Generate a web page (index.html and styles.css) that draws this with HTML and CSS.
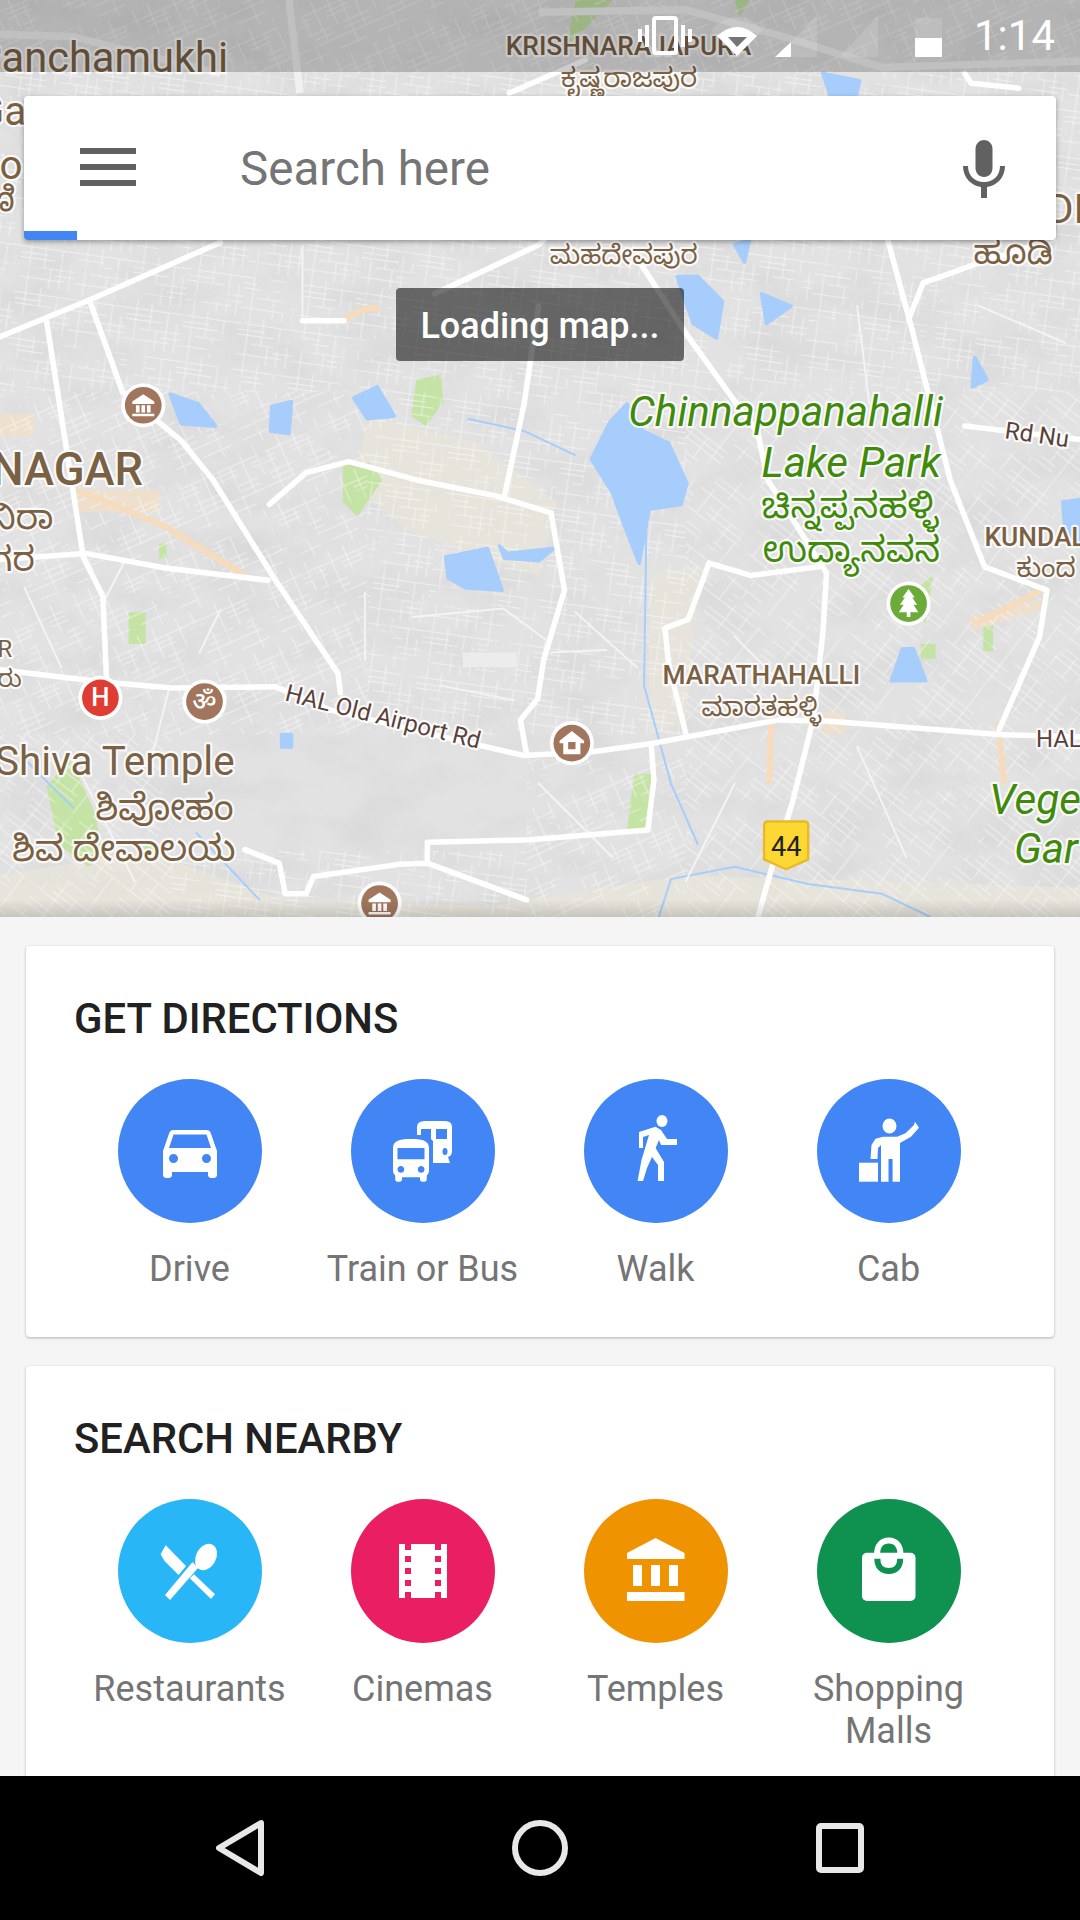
FILE: index.html
```html
<!DOCTYPE html>
<html lang="en">
<head>
<meta charset="utf-8">
<title>Maps</title>
<link rel="stylesheet" href="styles.css">
</head>
<body>
<div class="phone">
  <section class="map">
    <svg class="map-canvas" viewBox="0 0 882 749" preserveAspectRatio="none">
      <defs>
        <pattern id="st1" width="46" height="38" patternUnits="userSpaceOnUse" patternTransform="rotate(8)">
          <path class="grid" d="M0 6H46M0 11H22M0 15H30M12 22H46M30 27H46M0 31H38M8 0V38M20 0V22M34 6V38M42 14V38M26 22V38"/>
        </pattern>
        <pattern id="st2" width="34" height="52" patternUnits="userSpaceOnUse" patternTransform="rotate(-24)">
          <path class="grid" d="M0 9H34M0 13H20M0 17H20M10 26H34M10 31H34M0 36H34M0 45H24M6 0V26M16 9V52M27 0V36"/>
        </pattern>
        <pattern id="st3" width="58" height="44" patternUnits="userSpaceOnUse" patternTransform="rotate(38)">
          <path class="grid" d="M0 5H40M16 14H58M16 19H58M0 24H58M6 34H44M6 39H44M10 0V24M24 5V44M38 14V34M50 0V44"/>
        </pattern>
        <filter id="hill" x="0" y="0" width="100%" height="100%">
          <feTurbulence type="fractalNoise" baseFrequency="0.018 0.03" numOctaves="4" seed="7"/>
          <feColorMatrix type="matrix" values="0 0 0 0 0.4  0 0 0 0 0.4  0 0 0 0 0.4  1.4 0 0 0 -0.58"/>
        </filter>
        <filter id="patchy" x="0" y="0" width="100%" height="100%">
          <feTurbulence type="fractalNoise" baseFrequency="0.04" numOctaves="3" seed="23" result="noise"/>
          <feColorMatrix in="noise" type="matrix" values="0 0 0 0 1  0 0 0 0 1  0 0 0 0 1  7 0 0 0 -2.3" result="holes"/>
          <feComposite in="SourceGraphic" in2="holes" operator="in"/>
        </filter>
        <linearGradient id="fade" x1="0" y1="0" x2="0" y2="1">
          <stop offset="0" stop-color="#000" stop-opacity="0"/>
          <stop offset="1" stop-color="#000" stop-opacity=".14"/>
        </linearGradient>
      </defs>

      <rect class="ground" width="882" height="749"/>
      <rect width="882" height="749" filter="url(#hill)" class="hill"/>

      <g class="land-beige">
        <path d="M300 340 L390 362 L455 410 L440 470 L330 432 L290 395Z"/>
        <path d="M530 470 L572 462 L560 590 L530 600Z"/>
        <path d="M0 715 L120 695 L230 735 L400 740 L560 715 L882 725 V749 H0Z"/>
      </g>
      <g class="land-green">
        <path d="M340 310 L360 306 L362 328 L348 348 L336 340Z"/>
        <path d="M280 380 L302 378 L312 392 L292 422 L280 410Z"/>
        <path d="M38 642 L58 620 L78 665 L84 700 L72 708 L48 690Z"/>
        <path d="M518 632 L532 632 L530 676 L512 678Z"/>
        <path d="M752 478 L762 470 L756 510 L748 500Z"/>
        <path d="M470 0 L500 0 L462 40Z"/>
        <path d="M600 0 L612 0 L604 14Z"/>
        <rect x="105" y="500" width="14" height="26"/>
        <rect x="130" y="444" width="6" height="12"/>
        <rect x="118" y="688" width="10" height="14"/>
        <rect x="752" y="526" width="12" height="12"/>
        <rect x="803" y="510" width="8" height="22"/>
        <rect x="640" y="570" width="6" height="14"/>
      </g>
      <g class="land-peach">
        <path d="M0 338 H28 V356 H0Z"/>
        <path d="M60 400 H130 V418 H60Z"/>
        <path d="M790 505 L850 490 V498 L795 515Z"/>
        <path d="M672 582 H690 V600 H672Z"/>
      </g>

      <g class="streets" filter="url(#patchy)">
        <path fill="url(#st1)" d="M0 60H882V320H0Z"/>
        <path fill="url(#st2)" d="M0 320H300V600H0Z"/>
        <path fill="url(#st1)" d="M300 320H560V600H300Z"/>
        <path fill="url(#st3)" d="M560 320H882V749H560Z"/>
        <path fill="url(#st2)" d="M430 620H560V749H430Z"/>
        <path fill="url(#st3)" d="M0 600H140V749H0Z"/>
        <path fill="url(#st1)" d="M140 695H430V749H140Z"/>
        <path fill="url(#st2)" d="M0 0H882V60H0Z"/>
      </g>

      <g class="water">
        <path d="M483 375 L498 345 L512 330 L525 352 L546 362 L561 395 L556 412 L530 416 L522 460 L511 432 L500 402Z"/>
        <path d="M364 455 L398 448 L410 482 L380 480 L366 472Z"/>
        <path d="M408 446 L414 452 L452 448 L440 458 L412 456Z"/>
        <path d="M289 325 L308 316 L322 340 L300 342Z"/>
        <path d="M139 322 L162 330 L176 348 L148 346Z"/>
        <path d="M222 332 L238 328 L236 354 L221 352Z"/>
        <path d="M553 226 L570 226 L590 246 L585 276 L566 264Z"/>
        <path d="M622 240 L646 250 L626 264Z"/>
        <path d="M796 292 L806 310 L794 316Z"/>
        <path d="M737 530 L746 530 L756 556 L728 556Z"/>
        <path d="M672 60 L702 66 L698 84 L680 84Z"/>
        <path d="M868 410 L882 408 V442 L870 436Z"/>
        <path d="M600 200 L612 196 L608 214Z"/>
        <path d="M230 600 L238 600 L238 610 L230 610Z"/>
      </g>
      <g class="river">
        <path d="M382 342 L428 352 L470 372"/>
        <path d="M528 420 L526 560 L548 640 L570 690"/>
        <path d="M538 749 L548 718 L600 708 L660 722 L720 730 L760 749"/>
        <path d="M20 620 L60 660"/>
        <path d="M160 680 L212 735"/>
      </g>

      <g class="road-peach">
        <path d="M62 400 L135 430 L200 470"/>
        <path d="M815 590 L820 640 M630 590 L628 640"/>
        <path d="M855 480 L795 510"/>
        <path d="M281 262 Q295 250 310 252"/>
      </g>
      <g class="road-thin">
        <path d="M298 484 V539"/>
        <path d="M337 504 L411 497 L445 522"/>
        <path d="M450 533 L495 531"/>
        <path d="M163 533 L180 498"/>
        <path d="M138 563 L124 618"/>
        <path d="M101 460 L87 487"/>
        <path d="M247 201 V261"/>
        <path d="M600 520 L640 560"/>
        <path d="M700 610 L740 700"/>
        <path d="M60 620 L110 720"/>
        <path d="M700 250 L710 330"/>
        <path d="M360 560 L420 572"/>
        <path d="M470 500 L520 545"/>
        <path d="M440 640 L500 700"/>
        <path d="M800 250 L870 280"/>
        <path d="M20 480 L50 545"/>
        <path d="M600 640 L560 720"/>
      </g>
      <rect class="runway" x="378" y="533" width="44" height="12"/>
      <g class="road">
        <path d="M0 547 L84 557 L141 562 L225 561 L270 580 L345 598 L427 617 L484 614 L534 607 L636 588 L675 589 L816 600 L882 602"/>
        <path d="M0 275 L73 245 L180 198"/>
        <path d="M73 245 L100 320 L148 360 L174 392 L225 474 L276 550 L278 566"/>
        <path d="M38 262 L68 455 L84 487 L87 555"/>
        <path d="M0 457 L70 452 L135 464 L219 474"/>
        <path d="M220 412 L250 386 L285 377 L340 392 L405 405 L450 419 L461 482 L444 539 L439 571 L425 588 L430 616"/>
        <path d="M523 215 L562 275 L619 354 L627 392 L675 468 L672 517 L664 588 L647 656 L630 710 L619 749"/>
        <path d="M725 196 L745 270 L776 392 L804 463 L855 482 L849 520 L816 596"/>
        <path d="M579 460 L613 470 L669 463"/>
        <path d="M579 460 L562 506 L543 513 L546 542 L560 599"/>
        <path d="M200 694 L228 705 L233 730 L250 730 L256 716 L326 706 L349 705 L430 735"/>
        <path d="M349 705 L349 688 L433 686 L529 678 L534 637 L532 610"/>
        <path d="M788 348 L882 359"/>
        <path d="M355 240 L440 200 L520 120"/>
        <path d="M416 76 L478 49"/>
        <path d="M247 262 L281 262"/>
        <path d="M412 405 L428 330 L440 250"/>
        <path d="M788 60 L793 68 L832 72"/>
        <path d="M742 261 L754 231 L799 215 L860 196"/>
      </g>
      <path class="road-grey" d="M0 28 L60 30 L130 48 L180 60 M440 10 L560 8 L640 30 L720 55 L882 50"/>
      <path class="road-grey" d="M236 0 L245 76"/>

      <g class="lbl">
        <text class="t-name" x="-20" y="59">Panchamukhi</text>
        <text class="t-xl" x="-19" y="102">Ga</text>
        <text class="t-xl" x="-21" y="146">Bo</text>
        <text class="t-l" x="-12" y="172">ಣಿ</text>
        <text class="t-m t-med" x="413" y="45">KRISHNARAJAPURA</text>
        <text class="t-m" x="458" y="71">ಕೃಷ್ಣರಾಜಪುರ</text>
        <text class="t-m" x="449" y="216">ಮಹದೇವಪುರ</text>
        <text class="t-l" x="795" y="216">ಹೂಡಿ</text>
        <text class="t-xl" x="855" y="182">DI</text>
        <text class="t-xxl t-med" x="-7" y="396">NAGAR</text>
        <text class="t-l" x="-8" y="432">ನಿರಾ</text>
        <text class="t-l" x="-8" y="466">ಗರ</text>
        <text class="t-s" x="-2" y="537">R</text>
        <text class="t-s" x="-2" y="561">ರು</text>
        <text class="t-m t-med" x="804" y="446">KUNDAL</text>
        <text class="t-m" x="830" y="471">ಕುಂದ</text>
        <text class="t-m t-med" x="541" y="559">MARATHAHALLI</text>
        <text class="t-m" x="573" y="585">ಮಾರತಹಳ್ಳಿ</text>
        <text class="t-xl" x="-4" y="633">Shiva Temple</text>
        <text class="t-kn" x="78" y="670">ಶಿವೋಹಂ</text>
        <text class="t-kn" x="10" y="703">ಶಿವ ದೇವಾಲಯ</text>
      </g>
      <g class="lbl-road">
        <text class="t-s" transform="translate(232 572) rotate(14)">HAL Old Airport Rd</text>
        <text class="t-s" transform="translate(820 358) rotate(8)">Rd Nu</text>
        <text class="t-s" x="846" y="610">HAL</text>
      </g>
      <g class="lbl-park">
        <text class="t-park t-it" x="513" y="348">Chinnappanahalli</text>
        <text class="t-park t-it" x="622" y="390">Lake Park</text>
        <text class="t-kn" x="622" y="423">ಚಿನ್ನಪ್ಪನಹಳ್ಳಿ</text>
        <text class="t-kn" x="623" y="459">ಉದ್ಯಾನವನ</text>
        <text class="t-park t-it" x="808" y="665">Vege</text>
        <text class="t-park t-it" x="828" y="705">Gar</text>
      </g>

      <g class="pin pin-brown" transform="translate(117 331)">
        <circle class="pin-ring" r="18"/><circle r="15"/>
        <path class="pin-glyph" d="M-9 -3 L0 -9 L9 -3 V-1 H-9Z M-6 0 H-3 V6 H-6Z M-1.5 0 H1.5 V6 H-1.5Z M3 0 H6 V6 H3Z M-9 7 H9 V9 H-9Z"/>
      </g>
      <g class="pin pin-red" transform="translate(82 570)">
        <circle class="pin-ring" r="18"/><circle r="15"/>
        <text class="pin-h" y="7">H</text>
      </g>
      <g class="pin pin-brown" transform="translate(167 573)">
        <circle class="pin-ring" r="18"/><circle r="15"/>
        <text class="pin-om" y="7">ॐ</text>
      </g>
      <g class="pin pin-brown" transform="translate(467 607)">
        <circle class="pin-ring" r="18"/><circle r="15"/>
        <path class="pin-glyph" d="M-10 -2 L0 -10 L10 -2 V0 H7 V9 H-7 V0 H-10Z M-3 -1 V5 H3 V-1Z"/>
      </g>
      <g class="pin pin-green" transform="translate(742 493)">
        <circle class="pin-ring" r="18"/><circle r="15"/>
        <path class="pin-glyph" d="M0 -12 L5 -5 H3 L7 1 H4 L8 7 H1.5 V11 H-1.5 V7 H-8 L-4 1 H-7 L-3 -5 H-5Z"/>
      </g>
      <g class="pin pin-brown" transform="translate(310 738)">
        <circle class="pin-ring" r="18"/><circle r="15"/>
        <path class="pin-glyph" d="M-9 -3 L0 -9 L9 -3 V-1 H-9Z M-6 0 H-3 V6 H-6Z M-1.5 0 H1.5 V6 H-1.5Z M3 0 H6 V6 H3Z M-9 7 H9 V9 H-9Z"/>
      </g>
      <g transform="translate(642 690)">
        <path class="shield" d="M-18 -16 Q-18 -19 -15 -19 H15 Q18 -19 18 -16 V12 L0 20 L-18 12Z"/>
        <text class="shield-t" y="9">44</text>
      </g>
      <rect class="map-fade" y="735" width="882" height="14"/>
    </svg>

    <div class="statusbar">
      <svg class="status-icons" viewBox="0 0 310 72" width="310" height="72">
        <g class="st-solid">
          <path d="M20 16 H38 Q42 16 42 20 V51 Q42 55 38 55 H20 Q16 55 16 51 V20 Q16 16 20 16Z M20 20 V51 H38 V20Z" fill-rule="evenodd"/>
          <rect x="2" y="29" width="4" height="13"/>
          <rect x="9" y="25" width="4" height="22"/>
          <rect x="45" y="25" width="4" height="22"/>
          <rect x="52" y="29" width="4" height="13"/>
          <path d="M81 36 Q101 18 121 36 L101 56Z"/>
          <path d="M139 57 L155 42 V57Z"/>
          <rect x="279" y="38" width="27" height="19"/>
        </g>
        <path class="st-notch" d="M92 37 H111 L101 47Z"/>
        <g class="st-ghost">
          <path d="M75 30 Q101 4 127 30 L121 36 Q101 18 81 36Z"/>
          <path d="M155 42 L181 15 V57 H155Z"/>
          <path d="M204 57 L242 15 V57Z"/>
          <path d="M279 38 V18 H306 V38Z"/>
        </g>
      </svg>
      <span class="clock">1:14</span>
    </div>

    <div class="searchbar">
      <div class="hamburger"><i></i><i></i><i></i></div>
      <div class="search-text">Search here</div>
      <svg class="mic" viewBox="0 0 42 58" width="42" height="58">
        <path d="M21 37 C16 37 12.500 33 12.500 28 V9 C12.500 4 16 0 21 0 C26 0 29.500 4 29.500 9 V28 C29.500 33 26 37 21 37Z"/>
        <path d="M0 26 H5 C5 36 12 42 21 42 C30 42 37 36 37 26 H42 C42 38 33 46 24 47 V58 H18 V47 C9 46 0 38 0 26Z"/>
      </svg>
      <div class="progress"></div>
    </div>

    <div class="toast">Loading map...</div>
  </section>

  <main class="content">
    <section class="card">
      <h2 class="card-title">GET DIRECTIONS</h2>
      <div class="actions">
        <div class="action">
          <div class="disc disc-blue">
            <svg viewBox="0 0 24 24" width="72" height="72" class="ico"><path d="M18.92 6.010C18.720 5.420 18.160 5 17.500 5h-11c-.66 0-1.210.42-1.420 1.010L3 12v8c0 .55.45 1 1 1h1c.55 0 1-.45 1-1v-1h12v1c0 .55.45 1 1 1h1c.55 0 1-.45 1-1v-8l-2.080-5.990zM6.500 16c-.83 0-1.500-.67-1.500-1.500S5.670 13 6.500 13s1.500.67 1.500 1.500S7.330 16 6.500 16zm11 0c-.83 0-1.500-.67-1.500-1.500s.67-1.500 1.500-1.500 1.500.67 1.500 1.500-.67 1.500-1.500 1.500zM5 11l1.500-4.500h11L19 11H5z"/></svg>
          </div>
          <div class="action-label">Drive</div>
        </div>
        <div class="action">
          <div class="disc disc-blue">
            <svg viewBox="0 0 72 72" width="72" height="72" class="ico">
              <path fill-rule="evenodd" d="M30 20 V12 Q30 6 38 6 H58 Q65 6 65 12 V36 Q65 41 61 42 L63 48 H46 V26 L44 24 V14 H34 V20Z M49 14 V24 H60 V14Z M58 33 A2.500 3.500 0 1 0 58 40 A2.500 3.500 0 1 0 58 33Z"/>
              <path transform="translate(-3 19.500) scale(2.25)" d="M4 16c0 .88.39 1.670 1 2.220V20c0 .55.45 1 1 1h1c.55 0 1-.45 1-1v-1h8v1c0 .55.45 1 1 1h1c.55 0 1-.45 1-1v-1.780c.61-.55 1-1.340 1-2.220V6c0-3.500-3.580-4-8-4s-8 .5-8 4v10zm3.500 1c-.83 0-1.500-.67-1.500-1.500S6.670 14 7.500 14s1.500.67 1.500 1.500S8.330 17 7.500 17zm9 0c-.83 0-1.500-.67-1.500-1.500s.67-1.500 1.500-1.500 1.500.67 1.500 1.500-.67 1.500-1.500 1.500zm1.500-6H6V6h12v5z"/>
            </svg>
          </div>
          <div class="action-label">Train or Bus</div>
        </div>
        <div class="action">
          <div class="disc disc-blue">
            <svg viewBox="0 0 72 72" width="72" height="72" class="ico">
              <ellipse cx="42" cy="6" rx="5.500" ry="6"/>
              <path d="M19 17 L35.500 11.700 L41 15 L47 24 H57 V30 H41 L39 25 L35.600 33 L44 47 V66 H38 V50 L32 42 L27 53 L23 66 H17.600 L21.500 45 L29 20 L23 22 V33 H19Z"/>
            </svg>
          </div>
          <div class="action-label">Walk</div>
        </div>
        <div class="action">
          <div class="disc disc-blue">
            <svg viewBox="0 0 72 72" width="72" height="72" class="ico">
              <ellipse cx="36.500" cy="11" rx="7" ry="7.500"/>
              <rect x="6" y="47.700" width="19" height="19"/>
              <path d="M62 6.700 L66 12.700 L58 21.700 L47 28 V66.700 H39.600 V44 H35.500 V66.700 H28 V30 L25 33 L24.500 44 H17.500 L18.500 30 L22.500 23.700 L30 21.700 H44 L52.500 18.300 L61 10Z"/>
            </svg>
          </div>
          <div class="action-label">Cab</div>
        </div>
      </div>
    </section>

    <section class="card">
      <h2 class="card-title">SEARCH NEARBY</h2>
      <div class="actions">
        <div class="action">
          <div class="disc disc-sky">
            <svg viewBox="0 0 72 72" width="72" height="72" class="ico">
              <path d="M11.700 10.300 L32 31 L24.600 40 L10.500 26 L6.600 19.300Z"/>
              <ellipse cx="52" cy="22" rx="10" ry="14" transform="rotate(28 52 22)"/>
              <path d="M38.600 27 L44 33 L16 65 L11 60Z"/>
              <path d="M40 39.300 L61 59.300 L57 64 L35.800 43.300Z"/>
            </svg>
          </div>
          <div class="action-label">Restaurants</div>
        </div>
        <div class="action">
          <div class="disc disc-pink">
            <svg viewBox="0 0 72 72" width="72" height="72" class="ico">
              <path fill-rule="evenodd" d="M12 9 H60 V63 H12Z M18 9 V15 H24 V9Z M48 9 V15 H54 V9Z M18 21 V27 H24 V21Z M48 21 V27 H54 V21Z M18 33 V39 H24 V33Z M48 33 V39 H54 V33Z M18 45 V51 H24 V45Z M48 45 V51 H54 V45Z M18 57 V63 H24 V57Z M48 57 V63 H54 V57Z"/>
            </svg>
          </div>
          <div class="action-label">Cinemas</div>
        </div>
        <div class="action">
          <div class="disc disc-orange">
            <svg viewBox="0 0 72 72" width="72" height="72" class="ico">
              <path d="M35.500 3 L64.500 18 V24 H7 V18Z"/>
              <rect x="13" y="30" width="9" height="21"/>
              <rect x="31" y="30" width="9" height="21"/>
              <rect x="49" y="30" width="9" height="21"/>
              <rect x="7" y="57" width="57.500" height="9"/>
            </svg>
          </div>
          <div class="action-label">Temples</div>
        </div>
        <div class="action">
          <div class="disc disc-green">
            <svg viewBox="0 0 72 72" width="72" height="72" class="ico">
              <rect x="9" y="17.700" width="53.500" height="48.300" rx="5"/>
              <path class="bag-handle" d="M24 20 C24 10 29 5.500 35.800 5.500 C42.500 5.500 47.500 10 47.500 20"/>
              <path class="bag-cut" d="M24.300 23.700 C24.300 32 29 36 35.800 36 C42.500 36 47.200 32 47.200 23.700"/>
            </svg>
          </div>
          <div class="action-label">Shopping Malls</div>
        </div>
      </div>
    </section>
  </main>

  <nav class="navbar">
    <div class="nav-slot">
      <svg viewBox="0 0 48 56" width="48" height="56"><path class="nav-ico" d="M45 3 L3 28 L45 53Z"/></svg>
    </div>
    <div class="nav-slot">
      <svg viewBox="0 0 56 56" width="56" height="56"><circle class="nav-ico" cx="28" cy="28" r="25"/></svg>
    </div>
    <div class="nav-slot">
      <svg viewBox="0 0 48 50" width="48" height="50"><rect class="nav-ico" x="3" y="3" width="42" height="44" rx="2"/></svg>
    </div>
  </nav>
</div>
</body>
</html>
```
FILE: styles.css
```css
* { box-sizing: border-box; }
html, body { margin: 0; padding: 0; }
body { font-family: Roboto, "Noto Sans", sans-serif; background: #f5f5f5; }

.phone {
  width: 1080px;
  height: 1920px;
  display: flex;
  flex-direction: column;
  overflow: hidden;
}

/* Map */
.map { position: relative; height: 917px; flex: none; overflow: hidden; }
.map-canvas { display: block; width: 1080px; height: 917px; }
.ground { fill: #e2e2e2; }
.hill { opacity: .22; }
.grid { fill: none; stroke: #f8f8f8; stroke-width: .7; }
.streets { opacity: .8; }
.water { fill: #a6cdfb; stroke: #a6cdfb; stroke-width: 3; stroke-linejoin: round; }
.river { fill: none; stroke: #a6cdfb; stroke-width: 1.6; }
.land-beige { fill: #e9e6da; opacity: .7; }
.land-green { fill: #c4e3a4; }
.land-peach { fill: #f2e0c9; opacity: .8; }
.runway { fill: #ececec; }
.road { fill: none; stroke: #fff; stroke-width: 4.500; stroke-linejoin: round; stroke-linecap: round; }
.road-thin { fill: none; stroke: #f4f4f4; stroke-width: 1.600; stroke-linecap: round; }
.road-peach { fill: none; stroke: #f6dcbd; stroke-width: 5; }
.road-grey { fill: none; stroke: #f1f1f1; stroke-width: 6; }
.map-fade { fill: url(#fade); }

.lbl text, .lbl-road text, .lbl-park text {
  font-family: Roboto, "Noto Sans", "Noto Sans Kannada", sans-serif;
  paint-order: stroke;
  stroke: #fff;
  stroke-opacity: .85;
  stroke-width: 3.500px;
  stroke-linejoin: round;
}
.lbl { fill: #7a6144; }
.lbl-road { fill: #5c3f3a; }
.lbl-park { fill: #3f8a0a; }
.t-xxl { font-size: 37px; }
.t-xl { font-size: 33px; }
.t-name { font-size: 34px; }
.t-park { font-size: 34.500px; }
.t-kn { font-size: 29.500px; }
.t-l { font-size: 28px; }
.t-m { font-size: 21.500px; }
.t-s { font-size: 19.500px; }
.t-med { font-weight: 500; }
.t-it { font-style: italic; }

.pin circle { stroke: none; }
.pin-ring { fill: #fff !important; }
.pin-brown circle { fill: #a1765c; }
.pin-red circle { fill: #df3c33; }
.pin-green circle { fill: #6aab3a; }
.pin-glyph { fill: #fff; fill-rule: evenodd; }
.pin-h, .pin-om { fill: #fff; font-size: 21px; font-family: Roboto, "Noto Sans", sans-serif; text-anchor: middle; font-weight: 500; }
.pin-om { font-family: "Noto Sans", "DejaVu Sans", sans-serif; }
.shield { fill: #fdd835; stroke: #e9b92a; stroke-width: 2; }
.shield-t { fill: #222; font-size: 22px; font-family: Roboto, sans-serif; text-anchor: middle; }

/* Status bar over the map */
.statusbar {
  position: absolute;
  top: 0; left: 0; right: 0;
  height: 72px;
  background: rgba(0, 0, 0, .2);
  display: flex;
  justify-content: flex-end;
  align-items: center;
  padding-right: 25px;
  gap: 24px;
}
.status-icons { display: block; }
.st-solid { fill: #fff; }
.st-ghost { fill: rgba(255, 255, 255, .13); }
.st-notch { fill: #757575; }
.clock { color: #fff; font-size: 42px; line-height: 72px; width: 85px; text-align: right; }

/* Search card */
.searchbar {
  position: absolute;
  top: 96px; left: 24px;
  width: 1032px;
  height: 144px;
  background: #fff;
  border-radius: 4px;
  box-shadow: 0 2px 5px rgba(0, 0, 0, .35);
  display: flex;
  align-items: center;
  padding: 0 51px 0 56px;
  overflow: hidden;
}
.hamburger { width: 56px; display: flex; flex-direction: column; gap: 10px; flex: none; margin-bottom: 2px; }
.hamburger i { display: block; height: 6px; background: #616161; }
.search-text { flex: 1; margin-left: 104px; padding-top: 2px; font-size: 47.500px; color: #757575; }
.mic { fill: #616161; display: block; flex: none; margin-top: 2px; }
.progress { position: absolute; left: 0; bottom: 0; width: 53px; height: 9px; background: #4285f4; }

.toast {
  position: absolute;
  top: 288px; left: 396px;
  width: 288px;
  height: 73px;
  border-radius: 4px;
  background: rgba(0, 0, 0, .55);
  color: #fff;
  font-size: 36px;
  font-weight: 500;
  padding-top: 3px;
  display: flex;
  align-items: center;
  justify-content: center;
}

/* Cards */
.content { flex: 1; min-height: 0; overflow: hidden; padding: 29px 26px 0; display: flex; flex-direction: column; gap: 29px; background: #f5f5f5; }
.card { flex: none; background: #fff; border-radius: 4px; box-shadow: 0 1px 3px rgba(0, 0, 0, .28); padding: 48px 47px 47px; }
.card-title { margin: 0 0 35px; padding-left: 1px; font-size: 41.800px; line-height: 50px; font-weight: 500; color: #212121; }
.actions { display: grid; grid-template-columns: repeat(4, 233px); }
.action { display: flex; flex-direction: column; align-items: center; text-align: center; }
.disc { width: 144px; height: 144px; border-radius: 50%; display: flex; align-items: center; justify-content: center; }
.disc-blue { background: #4285f4; }
.disc-sky { background: #29b6f6; }
.disc-pink { background: #e91e63; }
.disc-orange { background: #f09300; }
.disc-green { background: #0f9150; }
.ico { display: block; fill: #fff; }
.bag-handle { fill: none; stroke: #fff; stroke-width: 6; }
.bag-cut { fill: none; stroke: #0f9150; stroke-width: 6; }
.action-label { margin-top: 25px; width: 210px; font-size: 36px; line-height: 42px; color: #757575; }

/* Navigation */
.navbar { flex: none; height: 144px; background: #000; display: flex; justify-content: center; align-items: center; }
.nav-slot { width: 300px; display: flex; justify-content: center; }
.nav-ico { fill: none; stroke: #e8e8e8; stroke-width: 6; stroke-linejoin: round; }
```
